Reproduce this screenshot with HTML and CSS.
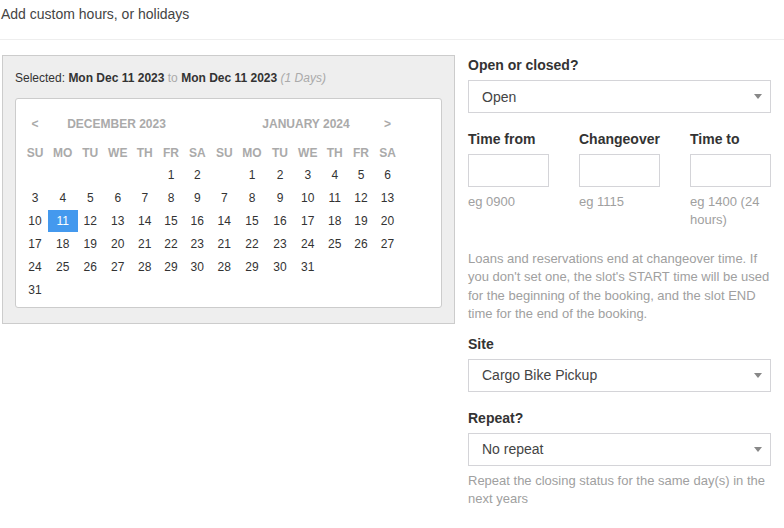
FILE: index.html
```html
<!DOCTYPE html>
<html>
<head>
<meta charset="utf-8">
<link rel="stylesheet" href="styles.css">
</head>
<body>
<div class="page">
  <div class="header">Add custom hours, or holidays</div>
  <div class="row">
    <div class="left">
      <div class="picker">
        <div class="selected">Selected: <b>Mon Dec 11 2023</b> <span class="muted">to</span> <b>Mon Dec 11 2023</b> <i class="muted">(1 Days)</i></div>
        <div class="cal">
          <div class="cal-head">
            <span class="nav c1">&lt;</span>
            <span class="month m1">DECEMBER 2023</span>
            <span class="month m2">JANUARY 2024</span>
            <span class="nav c14">&gt;</span>
          </div>
          <div class="cal-body">
            <span class="dow">SU</span><span class="dow">MO</span><span class="dow">TU</span><span class="dow">WE</span><span class="dow">TH</span><span class="dow">FR</span><span class="dow">SA</span>
            <span class="dow">SU</span><span class="dow">MO</span><span class="dow">TU</span><span class="dow">WE</span><span class="dow">TH</span><span class="dow">FR</span><span class="dow">SA</span>

            <span></span><span></span><span></span><span></span><span></span><span class="d">1</span><span class="d">2</span>
            <span></span><span class="d">1</span><span class="d">2</span><span class="d">3</span><span class="d">4</span><span class="d">5</span><span class="d">6</span>

            <span class="d">3</span><span class="d">4</span><span class="d">5</span><span class="d">6</span><span class="d">7</span><span class="d">8</span><span class="d">9</span>
            <span class="d">7</span><span class="d">8</span><span class="d">9</span><span class="d">10</span><span class="d">11</span><span class="d">12</span><span class="d">13</span>

            <span class="d">10</span><span class="d sel">11</span><span class="d">12</span><span class="d">13</span><span class="d">14</span><span class="d">15</span><span class="d">16</span>
            <span class="d">14</span><span class="d">15</span><span class="d">16</span><span class="d">17</span><span class="d">18</span><span class="d">19</span><span class="d">20</span>

            <span class="d">17</span><span class="d">18</span><span class="d">19</span><span class="d">20</span><span class="d">21</span><span class="d">22</span><span class="d">23</span>
            <span class="d">21</span><span class="d">22</span><span class="d">23</span><span class="d">24</span><span class="d">25</span><span class="d">26</span><span class="d">27</span>

            <span class="d">24</span><span class="d">25</span><span class="d">26</span><span class="d">27</span><span class="d">28</span><span class="d">29</span><span class="d">30</span>
            <span class="d">28</span><span class="d">29</span><span class="d">30</span><span class="d">31</span><span></span><span></span><span></span>

            <span class="d">31</span>
          </div>
        </div>
      </div>
    </div>
    <div class="right">
      <div class="label">Open or closed?</div>
      <div class="select"><span>Open</span><i class="caret"></i></div>

      <div class="times">
        <div class="tcol">
          <div class="label">Time from</div>
          <input class="input" type="text">
          <div class="hint">eg 0900</div>
        </div>
        <div class="tcol">
          <div class="label">Changeover</div>
          <input class="input" type="text">
          <div class="hint">eg 1115</div>
        </div>
        <div class="tcol">
          <div class="label">Time to</div>
          <input class="input" type="text">
          <div class="hint">eg 1400 (24 hours)</div>
        </div>
      </div>

      <p class="note">Loans and reservations end at changeover time. If you don't set one, the slot's START time will be used for the beginning of the booking, and the slot END time for the end of the booking.</p>

      <div class="label">Site</div>
      <div class="select"><span>Cargo Bike Pickup</span><i class="caret"></i></div>

      <div class="label gap">Repeat?</div>
      <div class="select"><span>No repeat</span><i class="caret"></i></div>
      <div class="hint">Repeat the closing status for the same day(s) in the next years</div>
    </div>
  </div>
</div>
</body>
</html>
```

FILE: styles.css
```css
* { box-sizing: border-box; }
html, body { margin: 0; padding: 0; background: #fff; }
body {
  font-family: "Liberation Sans", Arial, sans-serif;
  color: #333;
}
.page { padding-left: 2px; }
.header {
  font-size: 14px;
  line-height: 20px;
  color: #444;
  padding-top: 4px;
  padding-bottom: 15px;
  border-bottom: 1px solid #eee;
  margin-left: -2px;
  padding-left: 1px;
}
.row {
  display: flex;
  gap: 13px;
  margin-top: 15px;
}
.left { width: 453px; flex: none; }
.picker {
  background: #eee;
  border: 1px solid #ccc;
  padding: 14px 12px 15px 12px;
}
.selected {
  font-size: 12px;
  line-height: 16px;
  color: #333;
  margin-bottom: 12px;
}
.selected b { font-weight: bold; }
.muted { color: #aaa; }
.cal {
  background: #fff;
  border: 1px solid #ccc;
  border-radius: 3px;
  padding: 15px 0 6px 5px;
  font-size: 12px;
}
.cal-head, .cal-body {
  display: grid;
  grid-template-columns: 28px 27.5px 27.5px 27.5px 26.5px 26px 26.5px 27.5px 28px 28px 27.5px 26.5px 26px 27px;
  align-items: center;
  justify-items: center;
}
.cal-head { grid-template-rows: 20px; }
.cal-body {
  margin-top: 9px;
  grid-template-rows: 20px;
  grid-auto-rows: 23px;
}
.nav, .month, .dow {
  font-weight: bold;
  color: #aaa;
}
.nav.c1 { grid-column: 1; grid-row: 1; }
.nav.c14 { grid-column: 14; grid-row: 1; }
.month.m1 { grid-column: 2 / 7; grid-row: 1; }
.month.m2 { grid-column: 9 / 14; grid-row: 1; }
.d {
  color: #333;
  height: 22px;
  line-height: 22px;
  min-width: 30px;
  text-align: center;
}
.d.sel {
  background: #4499ee;
  color: #fff;
}
.right {
  width: 303px;
  flex: none;
}
.label {
  font-size: 14px;
  font-weight: bold;
  line-height: 20px;
  color: #333;
  margin-bottom: 5px;
}
.select {
  height: 33px;
  border: 1px solid #d4d4d8;
  display: flex;
  align-items: center;
  justify-content: space-between;
  padding: 0 8px 0 13px;
  font-size: 14px;
  color: #444;
  background: #fff;
}
.caret {
  width: 0;
  height: 0;
  border-left: 4px solid transparent;
  border-right: 4px solid transparent;
  border-top: 5px solid #888;
}
.times {
  display: flex;
  gap: 30px;
  margin-top: 16px;
}
.tcol { width: 81px; }
.input {
  display: block;
  width: 81px;
  height: 33px;
  border: 1px solid #d4d4d8;
  margin: 0;
  padding: 0;
  font-family: inherit;
  background: #fff;
}
.hint {
  font-size: 13px;
  line-height: 18px;
  color: #a0a0a0;
  margin-top: 6px;
}
.note {
  font-size: 13px;
  line-height: 18.4px;
  color: #a0a0a0;
  margin: 21px 0 10px 0;
}
.label.gap { margin-top: 16px; }
```
